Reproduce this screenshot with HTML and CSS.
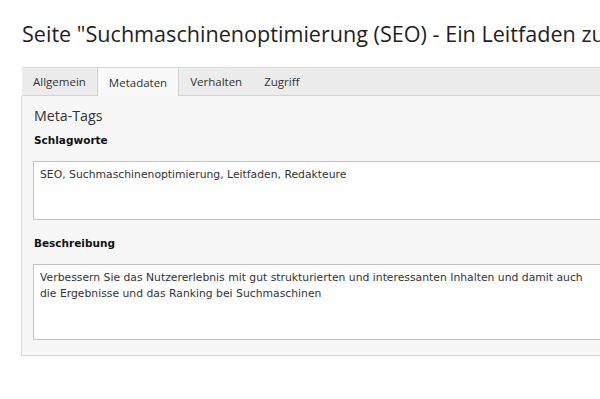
FILE: index.html
```html
<!DOCTYPE html>
<html lang="de">
<head>
<meta charset="utf-8">
<title>Seite bearbeiten</title>
<link rel="stylesheet" href="styles.css">
</head>
<body>
<div class="page">
  <h1 class="title">Seite "Suchmaschinenoptimierung (SEO) - Ein Leitfaden zu</h1>
  <div class="tabs">
    <div class="tab">Allgemein</div>
    <div class="tab active">Metadaten</div>
    <div class="tab">Verhalten</div>
    <div class="tab">Zugriff</div>
  </div>
  <div class="panel">
    <div class="section-title">Meta-Tags</div>
    <div class="label">Schlagworte</div>
    <div class="field field-short">
      <div class="line">SEO, Suchmaschinenoptimierung, Leitfaden, Redakteure</div>
    </div>
    <div class="label label-gap">Beschreibung</div>
    <div class="field field-tall">
      <div class="line">Verbessern Sie das Nutzererlebnis mit gut strukturierten und interessanten Inhalten und damit auch</div>
      <div class="line">die Ergebnisse und das Ranking bei Suchmaschinen</div>
    </div>
  </div>
</div>
</body>
</html>
```

FILE: styles.css
```css
html, body {
  margin: 0;
  padding: 0;
  background: #ffffff;
  overflow: hidden;
}

.page {
  width: 660px;
  padding-left: 21px;
}

.title {
  margin: 0 0 19px 1px;
  padding-top: 20px;
  font-family: "Open Sans", "Noto Sans", sans-serif;
  font-weight: 400;
  font-size: 21.6px;
  line-height: 28px;
  color: #1f1f1f;
  white-space: nowrap;
}

.tabs {
  display: flex;
  height: 27px;
  background: #ececec;
  border-top: 1px solid #dedede;
  border-bottom: 1px solid #d2d2d2;
  margin-left: 1px;
}

.tab {
  display: flex;
  align-items: center;
  padding: 0 11px;
  font-family: "Open Sans", "Noto Sans", sans-serif;
  font-size: 11.5px;
  color: #333333;
}

.tab.active {
  background: #f8f8f8;
  height: 29px;
  margin-top: -1px;
  border-left: 1px solid #d2d2d2;
  border-right: 1px solid #d2d2d2;
  border-top: 1px solid #d8d8d8;
  box-sizing: border-box;
}

.panel {
  background: #f7f7f7;
  border: 1px solid #dadada;
  border-top: none;
  padding: 10px 11px 15px 11px;
}

.section-title {
  font-family: "Open Sans", "Noto Sans", sans-serif;
  font-size: 14.2px;
  line-height: 20px;
  color: #333333;
  margin-left: 1px;
}

.label {
  margin-top: 6px;
  font-family: "DejaVu Sans", Verdana, sans-serif;
  font-weight: bold;
  font-size: 10.5px;
  line-height: 16px;
  color: #111111;
  margin-left: 1px;
}

.label-gap {
  margin-top: 15px;
}

.field {
  margin-top: 13px;
  background: #fefefe;
  border: 1px solid #c4c4c4;
  padding: 5px 6px;
  box-sizing: border-box;
  font-family: "DejaVu Sans", Verdana, sans-serif;
  font-size: 10.8px;
  line-height: 16px;
  color: #333333;
}

.field-short {
  height: 59px;
}

.field-tall {
  height: 76px;
}

.line {
  white-space: nowrap;
}
```
